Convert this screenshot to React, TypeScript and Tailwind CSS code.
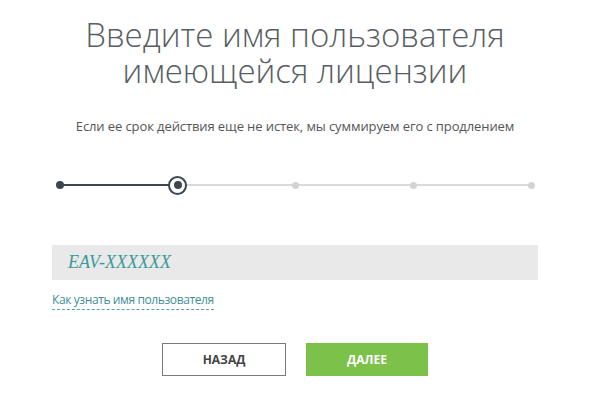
import React from "react";

const steps = [0, 1, 2, 3, 4];
const current = 1;

function Dot({ i }: { i: number }) {
  return (
    <div className="w-0 flex justify-center items-center relative z-10">
      {i === current ? (
        <div className="w-[19px] h-[19px] shrink-0 rounded-full border-2 border-[#3c4650] bg-white flex items-center justify-center">
          <div className="w-[8px] h-[8px] rounded-full bg-[#3c4650]" />
        </div>
      ) : i < current ? (
        <div className="w-[8px] h-[8px] shrink-0 rounded-full bg-[#3c4650]" />
      ) : (
        <div className="w-[7px] h-[7px] shrink-0 rounded-full bg-[#d3d3d6]" />
      )}
    </div>
  );
}

export default function App() {
  return (
    <div className="w-[600px] h-[400px] bg-white font-['Open_Sans',sans-serif] overflow-hidden">
      <div className="w-[486px] ml-[52px] flex flex-col">
        <h1 className="mt-[17px] text-center text-[33px] leading-[36px] font-light text-[#575d62]">
          <span className="block">Введите имя пользователя</span>
          <span className="block">имеющейся лицензии</span>
        </h1>
        <p className="mt-[28px] text-center text-[13px] leading-[18px] text-[#555] tracking-[-0.1px]">
          Если ее срок действия еще не истек, мы суммируем его с продлением
        </p>

        <div className="mt-[40px] ml-[8px] w-[471px] h-[20px] flex items-center">
          {steps.map((i) => (
            <React.Fragment key={i}>
              <Dot i={i} />
              {i < steps.length - 1 && (
                <div className={i < current ? "flex-1 h-[2px] bg-[#3c4650]" : "flex-1 h-[2px] bg-[#dadada]"} />
              )}
            </React.Fragment>
          ))}
        </div>

        <div className="mt-[50px] h-[35px] bg-[#e9e9e9] flex items-center pl-[16px]">
          <span className="font-['Liberation_Serif',serif] italic text-[18px] text-[#3a9a9a]">EAV-XXXXXX</span>
        </div>

        <div className="mt-[6px]">
          <span className="text-[12px] leading-[16px] text-[#3f8e95] tracking-[-0.4px] border-b border-dashed border-[#5aa0a6] pb-[1px]">
            Как узнать имя пользователя
          </span>
        </div>

        <div className="mt-[33px] flex justify-center gap-[20px]">
          <button className="w-[124px] h-[33px] border border-[#7a7a7a] bg-white text-[12px] font-bold text-[#444]">
            НАЗАД
          </button>
          <button className="w-[122px] h-[33px] bg-[#7cc24a] text-[12px] font-bold text-white">
            ДАЛЕЕ
          </button>
        </div>
      </div>
    </div>
  );
}
